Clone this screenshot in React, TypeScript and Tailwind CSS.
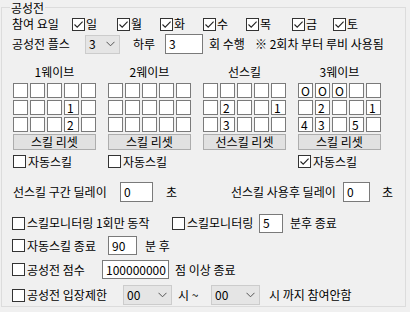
import React from 'react'

const days = [
  { d: '일', w: 'w-[45px]' },
  { d: '월', w: 'w-[43px]' },
  { d: '화', w: 'w-[43px]' },
  { d: '수', w: 'w-[43px]' },
  { d: '목', w: 'w-[46px]' },
  { d: '금', w: 'w-[41px]' },
  { d: '토', w: 'w-[40px]' },
]

// each wave grid: 3 rows x 5 cells
const waves = [
  { title: '1웨이브', reset: '스킬 리셋', auto: 'off', cells: ['', '', '', '', '', '', '', '', '1', '', '', '', '', '2', ''] },
  { title: '2웨이브', reset: '스킬 리셋', auto: 'off', cells: ['', '', '', '', '', '', '', '', '', '', '', '', '', '', ''] },
  { title: '선스킬', reset: '선스킬 리셋', auto: 'none', cells: ['', '', '', '', '', '', '2', '', '', '1', '', '3', '', '', ''] },
  { title: '3웨이브', reset: '스킬 리셋', auto: 'on', cells: ['O', 'O', 'O', '', '', '', '2', '', '', '1', '4', '3', '', '5', ''] },
]

function CheckBox({ checked = false }: { checked?: boolean }) {
  return (
    <span className="w-[13px] h-[13px] border border-[#333] bg-white flex items-center justify-center shrink-0">
      {checked && (
        <svg width="11" height="11" viewBox="0 0 11 11">
          <path d="M1.5 5.5 L4.2 8.2 L9.6 2.6" fill="none" stroke="#222" strokeWidth={1.1} />
        </svg>
      )}
    </span>
  )
}

function TextBox({ value, className }: { value: string; className?: string }) {
  return (
    <div className={`bg-white border border-[#7a7a7a] flex items-center pl-[3px] ${className ?? ''}`}>
      {value}
    </div>
  )
}

function Select({ value, className }: { value: string; className?: string }) {
  return (
    <div className={`bg-[#e5e5e5] border border-[#cccccc] flex items-center justify-between pl-[3px] pr-[4px] ${className ?? ''}`}>
      <span>{value}</span>
      <svg width="9" height="6" viewBox="0 0 9 6">
        <path d="M0.5 0.8 L4.5 4.8 L8.5 0.8" fill="none" stroke="#555" strokeWidth={1} />
      </svg>
    </div>
  )
}

export default function App() {
  return (
    <div
      className="w-[410px] h-[312px] bg-[#f0f0f0] overflow-hidden text-[12px] leading-[14px] text-black"
      style={{ fontFamily: '"Noto Sans CJK KR", "Noto Sans", sans-serif' }}
    >
      <div className="relative ml-[1px] mt-[7px] w-[405px] h-[300px] border border-[#dcdcdc]">
        <span className="absolute left-[8px] top-[-7px] px-[1px] bg-[#f0f0f0]">공성전</span>

        <div className="pl-[10px] flex flex-col">
          {/* 참여 요일 */}
          <div className="flex items-center h-[18px] mt-[7px]">
            <span className="w-[60px]">참여 요일</span>
            {days.map((x) => (
              <label key={x.d} className={`flex items-center gap-[1px] ${x.w}`}>
                <CheckBox checked />
                <span>{x.d}</span>
              </label>
            ))}
          </div>

          {/* 공성전 플스 */}
          <div className="flex items-center h-[20px] mt-[1px]">
            <span className="w-[73px]">공성전 플스</span>
            <Select value="3" className="w-[35px] h-[19px]" />
            <span className="ml-[13px] w-[32px]">하루</span>
            <TextBox value="3" className="w-[38px] h-[20px]" />
            <span className="ml-[6px] w-[46px]">회 수행</span>
            <span>※ 2회차 부터 루비 사용됨</span>
          </div>

          {/* wave grids */}
          <div className="flex gap-[12px] mt-[11px] ml-[1px]">
            {waves.map((w) => (
              <div key={w.title} className="w-[83px] flex flex-col">
                <div className="h-[14px] text-center">{w.title}</div>
                <div className="grid grid-cols-5 gap-[2px] mt-[4px]">
                  {w.cells.map((c, i) => (
                    <div key={i} className="h-[15px] bg-white border border-[#7a7a7a] flex items-center pl-[2px] leading-[13px]">
                      {c}
                    </div>
                  ))}
                </div>
                <div className="h-[16px] mt-[2px] bg-[#e1e1e1] border border-[#adadad] flex items-center justify-center">
                  {w.reset}
                </div>
                <div className="h-[15px] mt-[4px] flex items-center gap-[2px]">
                  {w.auto !== 'none' && (
                    <>
                      <CheckBox checked={w.auto === 'on'} />
                      <span>자동스킬</span>
                    </>
                  )}
                </div>
              </div>
            ))}
          </div>

          {/* 딜레이 */}
          <div className="flex items-center h-[20px] mt-[13px]">
            <span className="ml-[1px] w-[107px]">선스킬 구간 딜레이</span>
            <TextBox value="0" className="w-[33px] h-[20px]" />
            <span className="ml-[13px] w-[65px]">초</span>
            <span className="w-[112px]">선스킬 사용후 딜레이</span>
            <TextBox value="0" className="w-[27px] h-[20px]" />
            <span className="ml-[12px]">초</span>
          </div>

          {/* 스킬모니터링 */}
          <div className="flex items-center h-[20px] mt-[11px]">
            <CheckBox />
            <span className="ml-[2px] w-[145px]">스킬모니터링 1회만 동작</span>
            <CheckBox />
            <span className="ml-[2px] w-[72px]">스킬모니터링</span>
            <TextBox value="5" className="w-[24px] h-[19px]" />
            <span className="ml-[7px]">분후 종료</span>
          </div>

          {/* 자동스킬 종료 */}
          <div className="flex items-center h-[19px] mt-[3px]">
            <CheckBox />
            <span className="ml-[2px] w-[81px]">자동스킬 종료</span>
            <TextBox value="90" className="w-[29px] h-[19px]" />
            <span className="ml-[8px]">분 후</span>
          </div>

          {/* 공성전 점수 */}
          <div className="flex items-center h-[19px] mt-[5px]">
            <CheckBox />
            <span className="ml-[2px] w-[75px]">공성전 점수</span>
            <TextBox value="100000000" className="w-[67px] h-[19px]" />
            <span className="ml-[6px]">점 이상 종료</span>
          </div>

          {/* 공성전 입장제한 */}
          <div className="flex items-center h-[20px] mt-[6px]">
            <CheckBox />
            <span className="ml-[2px] w-[96px]">공성전 입장제한</span>
            <Select value="00" className="w-[49px] h-[20px]" />
            <span className="ml-[6px] w-[33px]">시 ~</span>
            <Select value="00" className="w-[49px] h-[20px]" />
            <span className="ml-[9px]">시 까지 참여안함</span>
          </div>
        </div>
      </div>
    </div>
  )
}
